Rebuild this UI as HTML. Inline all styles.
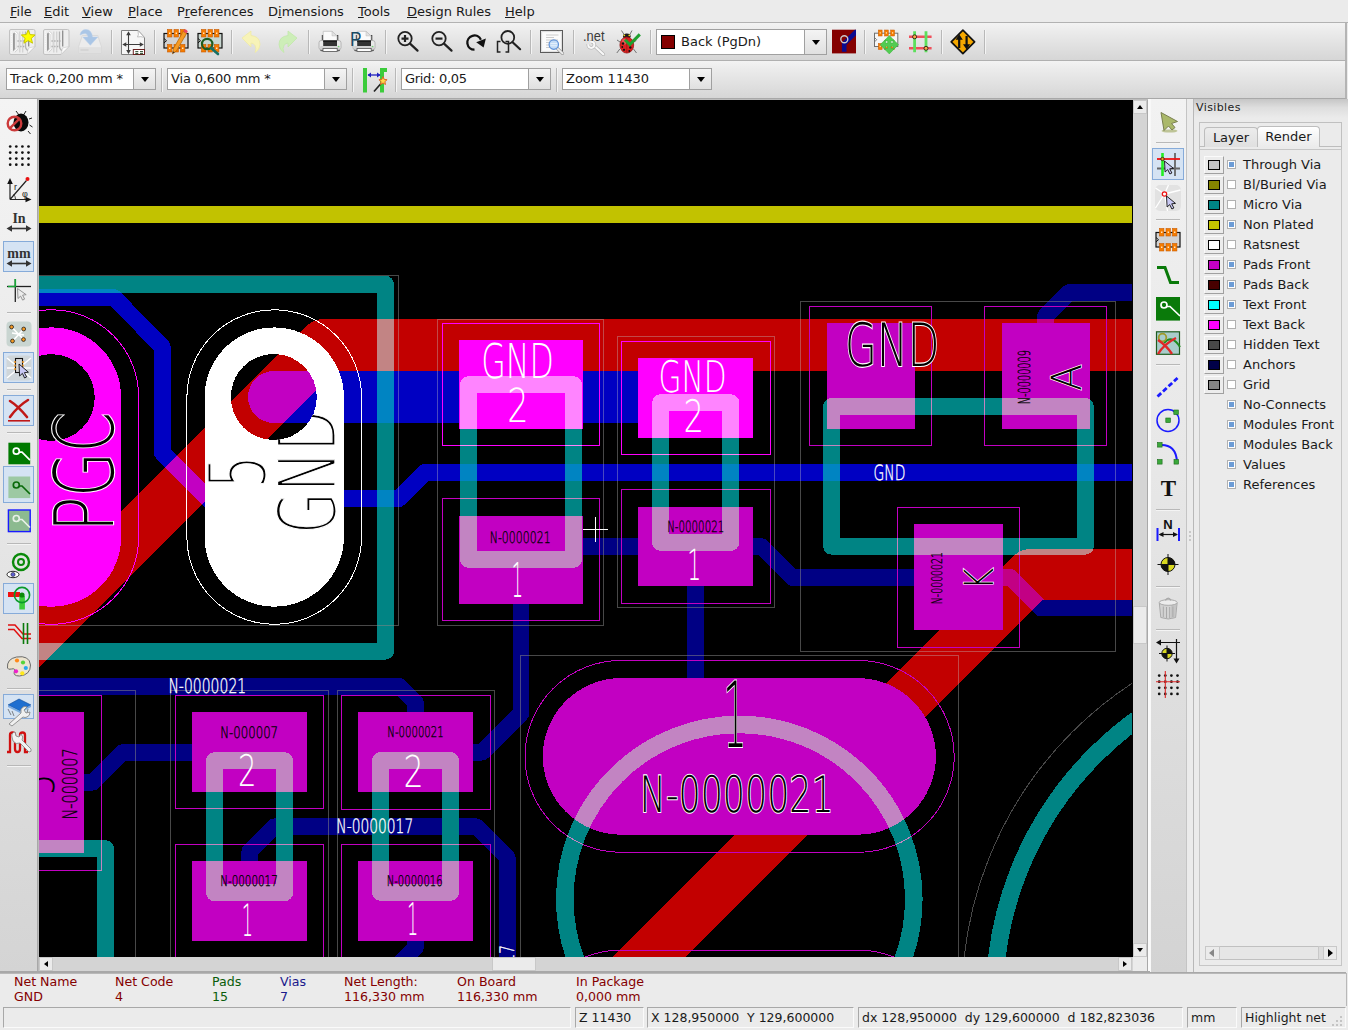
<!DOCTYPE html>
<html><head><meta charset="utf-8"><title>Pcbnew</title>
<style>
html,body{margin:0;padding:0;}
body{width:1348px;height:1030px;overflow:hidden;background:#ebebeb;font-family:"DejaVu Sans","Liberation Sans",sans-serif;font-size:13px;color:#1a1a1a;position:relative;}
#cv{position:absolute;left:39px;top:100px;width:1094px;height:857px;background:#000;}
#cv g.b{isolation:isolate;}

.abs{position:absolute}
#menubar{position:absolute;left:0;top:0;width:1348px;height:23px;background:#ebebeb;border-bottom:1px solid #b2b2b2;box-sizing:border-box}
#menubar span{position:absolute;top:4px;font-size:13px;white-space:nowrap;color:#1a1a1a}
#menubar u{text-decoration:underline;text-underline-offset:1px}
.tb{position:absolute;left:0;width:1345px;background:linear-gradient(#f3f3f3,#ececec 20%,#d6d6d6);border-right:2px solid #b4b4b4}
#tb1{top:23px;height:37px;border-bottom:1px solid #b0b0b0}
#tb2{top:61px;height:37px;border-bottom:1px solid #a8a8a8}
.sep{position:absolute;width:1px;background:#b8b8b8;box-shadow:1px 0 0 #f4f4f4}
.hsep{position:absolute;height:1px;background:#b8b8b8;box-shadow:0 1px 0 #f4f4f4}
.combo{position:absolute;height:22px;box-sizing:border-box;border:1px solid #a0a0a0;background:#fff;font-size:13px;line-height:20px;white-space:nowrap}
.combo .t{position:absolute;left:3px;top:0}
.combo .btn{position:absolute;top:-1px;right:-1px;width:23px;height:22px;box-sizing:border-box;border:1px solid #a0a0a0;background:linear-gradient(#f4f4f4,#e0e0e0)}
.combo .btn i{position:absolute;left:7px;border-left:4.5px solid transparent;border-right:4.5px solid transparent;border-top:5px solid #000}
.ico{position:absolute;overflow:visible}
#ltb{position:absolute;left:0;top:99px;width:37px;height:873px;background:linear-gradient(#f4f4f4,#e9e9e9 40%,#d4d4d4);border-right:1px solid #a8a8a8;box-shadow:1px 0 0 #bababa;box-sizing:content-box}
#rtb{position:absolute;left:1150px;top:99px;width:37px;height:873px;background:linear-gradient(#f2f2f2,#e8e8e8 40%,#d3d3d3);box-shadow:inset 1px 0 0 #f8f8f8, inset -1px 0 0 #c4c4c4}
.sel{position:absolute;box-sizing:border-box;border:1px solid #86abd9;background:#d5e3f3}
#vsb{position:absolute;left:1133px;top:100px;width:15px;height:857px;background:#d4d4d4;border-right:1px solid #a8a8a8;box-sizing:border-box}
#hsb{position:absolute;left:39px;top:957px;width:1094px;height:14px;background:#d4d4d4;box-sizing:border-box}
.sbb{position:absolute;background:#ebebeb;border:1px solid #c8c8c8;box-sizing:border-box}
.tri{position:absolute;width:0;height:0}
#msg{position:absolute;left:0;top:973px;width:1346px;height:32px;background:#ebebeb;border-top:1px solid #b8b8b8;border-bottom:1px solid #b8b8b8;border-right:1px solid #b8b8b8;font-size:12.6px}
#msg span{position:absolute;white-space:nowrap;line-height:15px}
#status{position:absolute;left:0;top:1006px;width:1348px;height:24px;background:#ebebeb;font-size:12.5px}
#status div{position:absolute;top:1px;height:21px;box-sizing:border-box;border:1px solid;border-color:#a8a8a8 #fafafa #fafafa #a8a8a8;line-height:19px;white-space:pre;padding-left:3px}
#lay{position:absolute;left:1193px;top:99px;width:155px;height:873px;background:#ebebeb;border-left:1px solid #b8b8b8;box-sizing:border-box;font-size:13px}
#lay .row{position:absolute;left:0;height:20px;white-space:nowrap}
.sw{position:absolute;left:10px;width:20px;height:18px;box-sizing:border-box;border:1px solid;border-color:#fafafa #a0a0a0 #a0a0a0 #fafafa;background:#ececec}
.sw i{position:absolute;left:3px;top:3px;width:12px;height:10px;box-sizing:border-box;border:1px solid #000}
.cb{position:absolute;left:33px;width:9px;height:9px;box-sizing:border-box;border:1px solid #b0b0b0;background:#fff}
.cb.on:after{content:"";position:absolute;left:1px;top:1px;width:5px;height:5px;background:#6c9cd6}
.lbl{position:absolute;left:49px;line-height:20px}

</style></head><body>
<div id="menubar">
<span style="left:10px"><u>F</u>ile</span>
<span style="left:44px"><u>E</u>dit</span>
<span style="left:82px"><u>V</u>iew</span>
<span style="left:128px"><u>P</u>lace</span>
<span style="left:177px">P<u>r</u>eferences</span>
<span style="left:268px">D<u>i</u>mensions</span>
<span style="left:358px"><u>T</u>ools</span>
<span style="left:407px"><u>D</u>esign Rules</span>
<span style="left:505px"><u>H</u>elp</span>
</div>
<div class="tb" id="tb1"></div><div class="tb" id="tb2"></div>
<div class="sep" style="left:111px;top:30px;height:24px"></div>
<div class="sep" style="left:154px;top:30px;height:24px"></div>
<div class="sep" style="left:231px;top:30px;height:24px"></div>
<div class="sep" style="left:308px;top:30px;height:24px"></div>
<div class="sep" style="left:385px;top:30px;height:24px"></div>
<div class="sep" style="left:530px;top:30px;height:24px"></div>
<div class="sep" style="left:573px;top:30px;height:24px"></div>
<div class="sep" style="left:650px;top:30px;height:24px"></div>
<div class="sep" style="left:864px;top:30px;height:24px"></div>
<div class="sep" style="left:941px;top:30px;height:24px"></div>
<div class="sep" style="left:984px;top:30px;height:24px"></div>
<div class="sep" style="left:161px;top:68px;height:24px"></div>
<div class="sep" style="left:352px;top:68px;height:24px"></div>
<div class="sep" style="left:395px;top:68px;height:24px"></div>
<div class="sep" style="left:556px;top:68px;height:24px"></div>
<svg class="ico" style="left:0;top:0" width="1348" height="100" viewBox="0 0 1348 100"><path d="M11.0,29.5 h22.5 q1.5,0 1.5,1.5 v15.5 l-8,8 h-16 q-1.5,0 -1.5,-1.5 v-22 q0,-1.5 1.500,-1.500 z" fill="#eeeeee" stroke="#c2c2c2" stroke-width="1"/><path d="M11.5,31.5 v21" stroke="#fafafa" stroke-dasharray="1 1.3"/><path d="M13.1,33.5 l1.700,-1 v17.500 l-1.700,1.200 z" fill="#8e8e8e"/><path d="M14.5,31.5 l2.600,2.600 v14.500 l-3,3" fill="none" stroke="#c8c8c8" stroke-width="2.400"/><path d="M14.5,31.5 l2.600,2.600 v14.500 l-3,3" fill="none" stroke="#fff" stroke-width="1.200"/><path d="M19.8,31.5 v21 M22.7,31.5 v21" stroke="#d2d2d2" stroke-width="1.300"/><path d="M25.5,31.5 v14 q0,4 3,5.500" fill="none" stroke="#b4b4b4" stroke-width="1.300"/><path d="M28.7,30.5 v16" stroke="#8c8c8c" stroke-width="1.300"/><path d="M17.5,41.0 h9 M17.5,46.5 h7" stroke="#a8a8a8" stroke-width="1.600" stroke-dasharray="1.2 1.600"/><path d="M27.0,54.5 l8,-8 l-6.500,1.500 z" fill="#fafafa" stroke="#c8c8c8" stroke-width=".6"/><polygon points="28.2,30.0 30.1,34.6 35.1,35.0 31.3,38.3 32.5,43.2 28.2,40.6 23.9,43.2 25.1,38.3 21.3,35.0 26.3,34.6" fill="#ffff00" stroke="#c8c800" stroke-width="1"/><path d="M45.0,29.5 h22.5 q1.5,0 1.5,1.5 v15.5 l-8,8 h-16 q-1.5,0 -1.5,-1.5 v-22 q0,-1.5 1.500,-1.500 z" fill="#eeeeee" stroke="#c2c2c2" stroke-width="1"/><path d="M45.5,31.5 v21" stroke="#fafafa" stroke-dasharray="1 1.3"/><path d="M47.1,33.5 l1.700,-1 v17.500 l-1.700,1.200 z" fill="#8e8e8e"/><path d="M48.5,31.5 l2.600,2.600 v14.500 l-3,3" fill="none" stroke="#c8c8c8" stroke-width="2.400"/><path d="M48.5,31.5 l2.600,2.600 v14.500 l-3,3" fill="none" stroke="#fff" stroke-width="1.200"/><path d="M53.8,31.5 v21 M56.7,31.5 v21" stroke="#d2d2d2" stroke-width="1.300"/><path d="M59.5,31.5 v14 q0,4 3,5.500" fill="none" stroke="#b4b4b4" stroke-width="1.300"/><path d="M62.7,30.5 v16" stroke="#8c8c8c" stroke-width="1.300"/><path d="M51.5,41.0 h9 M51.5,46.5 h7" stroke="#a8a8a8" stroke-width="1.600" stroke-dasharray="1.2 1.600"/><path d="M61.0,54.5 l8,-8 l-6.500,1.500 z" fill="#fafafa" stroke="#c8c8c8" stroke-width=".6"/><path d="M78.500,47 l3.800,-11.500 h15.500 l3.700,11.500 v6 h-23 z" fill="#ececec" stroke="#d6d6d6" stroke-width=".8"/><path d="M78.800,47.200 h22.400 v5.800 h-22.400 z" fill="#e0e0e0"/><path d="M80.500,50 h8" stroke="#d2d2d2" stroke-width="1.500"/><path d="M80,35 q1,-5.500 6,-5.500 q5.500,0 6.500,7.500 h5.300 l-7.500,8.300 l-7.500,-8.300 h5.200 q-0.500,-3.500 -3,-3.500 q-2.500,0 -5,1.500 z" fill="#aac6e6" stroke="#b8cfea" stroke-width=".5"/><path d="M121.5,30.5 h16.500 l6.500,7 v17 h-23 z" fill="#f6f6f6" stroke="#808080" stroke-width="1"/><path d="M138,30.500 q1,5 -0.500,6.500 q3,-1 7,0.500 z" fill="#fff" stroke="#aaa" stroke-width=".7"/><path d="M128.500,33 v19.500 M124,44.500 h18" stroke="#3c3c3c" stroke-width="1.100"/><path d="M128.500,31.300 l-2.300,4 h4.600 z M128.500,54 l-2.300,-4 h4.600 z M122.300,44.500 l4,-2.300 v4.600 z M143.800,44.500 l-4,-2.300 v4.600 z" fill="#3c3c3c"/><rect x="133.300" y="49.500" width="11.200" height="5" fill="#fff" stroke="#6a2020" stroke-width="1"/><path d="M135.300,51.700 h3 M140,51.700 h3 M135.300,53.700 h3 M140,53.700 h3" stroke="#1a3a1a" stroke-width="1"/><rect x="164" y="33.5" width="24" height="14.5" fill="#d2d2d2" stroke="#111" stroke-width="1.2"/><path d="M164,38.5 l2.5,2.2 l-2.5,2.2" fill="none" stroke="#111" stroke-width="1"/><rect x="167.5" y="29.5" width="4.4" height="7.5" fill="#f57c00" stroke="#c85a00" stroke-width=".6"/><rect x="169.1" y="32.5" width="1.300" height="1.500" fill="#fff0d8"/><rect x="167.5" y="44.5" width="4.4" height="7.5" fill="#f57c00" stroke="#c85a00" stroke-width=".6"/><rect x="169.1" y="47.5" width="1.300" height="1.500" fill="#fff0d8"/><rect x="174.0" y="29.5" width="4.4" height="7.5" fill="#f57c00" stroke="#c85a00" stroke-width=".6"/><rect x="175.6" y="32.5" width="1.300" height="1.500" fill="#fff0d8"/><rect x="174.0" y="44.5" width="4.4" height="7.5" fill="#f57c00" stroke="#c85a00" stroke-width=".6"/><rect x="175.6" y="47.5" width="1.300" height="1.500" fill="#fff0d8"/><rect x="180.5" y="29.5" width="4.4" height="7.5" fill="#f57c00" stroke="#c85a00" stroke-width=".6"/><rect x="182.1" y="32.5" width="1.300" height="1.500" fill="#fff0d8"/><rect x="180.5" y="44.5" width="4.4" height="7.5" fill="#f57c00" stroke="#c85a00" stroke-width=".6"/><rect x="182.1" y="47.5" width="1.300" height="1.500" fill="#fff0d8"/><path d="M186.5,33.5 l-3.2,-2.2 l-10,17.5 l-0.8,5 l4,-3 z" fill="#f59a23" stroke="#b86400" stroke-width=".7"/><path d="M183.3,31.3 l3.2,2.2 l1.3,-2.3 q-1.2,-2 -3.2,-2 z" fill="#e84a5f"/><path d="M172.5,53.8 l0.4,-2.6 l1.9,1.3 z" fill="#333"/><rect x="198" y="33.5" width="24" height="14.5" fill="#c8d6d0" stroke="#111" stroke-width="1.2"/><path d="M198,38.5 l2.5,2.2 l-2.5,2.2" fill="none" stroke="#111" stroke-width="1"/><rect x="201.5" y="29.5" width="4.4" height="7.5" fill="#f57c00" stroke="#c85a00" stroke-width=".6"/><rect x="203.1" y="32.5" width="1.300" height="1.500" fill="#fff0d8"/><rect x="201.5" y="44.5" width="4.4" height="7.5" fill="#f57c00" stroke="#c85a00" stroke-width=".6"/><rect x="203.1" y="47.5" width="1.300" height="1.500" fill="#fff0d8"/><rect x="208.0" y="29.5" width="4.4" height="7.5" fill="#f57c00" stroke="#c85a00" stroke-width=".6"/><rect x="209.6" y="32.5" width="1.300" height="1.500" fill="#fff0d8"/><rect x="208.0" y="44.5" width="4.4" height="7.5" fill="#f57c00" stroke="#c85a00" stroke-width=".6"/><rect x="209.6" y="47.5" width="1.300" height="1.500" fill="#fff0d8"/><rect x="214.5" y="29.5" width="4.4" height="7.5" fill="#f57c00" stroke="#c85a00" stroke-width=".6"/><rect x="216.1" y="32.5" width="1.300" height="1.500" fill="#fff0d8"/><rect x="214.5" y="44.5" width="4.4" height="7.5" fill="#f57c00" stroke="#c85a00" stroke-width=".6"/><rect x="216.1" y="47.5" width="1.300" height="1.500" fill="#fff0d8"/><circle cx="207.2" cy="44" r="5.2" fill="none" stroke="#1e5c1e" stroke-width="2.2"/><path d="M211,48 l7,6" stroke="#157064" stroke-width="2.6" stroke-linecap="round"/><path d="M242,38 l9,-7 v4.5 q9,1 9,9 q0,5 -5,8 q2,-4 0,-7 q-1.5,-2.5 -4,-2.5 v4 z" fill="#f7f3b8" stroke="#efe9a0" stroke-width=".7"/><path d="M297,38 l-9,-7 v4.5 q-9,1 -9,9 q0,5 5,8 q-2,-4 0,-7 q1.5,-2.5 4,-2.5 v4 z" fill="#cdeeb8" stroke="#bfe6a6" stroke-width=".7"/><rect x="320.2" y="47.0" width="19.800" height="4.300" rx="1.500" fill="#4c4c4c"/><rect x="321.8" y="35.0" width="1.500" height="6" fill="#444"/><rect x="336.8" y="35.0" width="1.500" height="6" fill="#444"/><path d="M323.2,40.5 v-9.200 h8.800 l5,4.600 v4.600 z" fill="#fafafa" stroke="#b8b8b8" stroke-width=".7"/><path d="M332,31.3 v4.600 h5 z" fill="#e2e2e2" stroke="#b8b8b8" stroke-width=".5"/><rect x="319" y="40.5" width="22" height="9.300" rx="2.200" fill="#e9e9e9" stroke="#a8a8a8" stroke-width=".8"/><rect x="319.6" y="46.0" width="20.800" height="3.300" rx="1.500" fill="#d2d2d2"/><rect x="323.2" y="40.5" width="13.800" height="5.500" fill="#333"/><rect x="323.2" y="40.5" width="13.800" height="1.500" fill="#1c1c1c"/><rect x="323" y="48.5" width="14.200" height="3" fill="#fdfdfd" stroke="#555" stroke-width=".8"/><circle cx="338.6" cy="46.5" r=".8" fill="#6fd86f"/><rect x="354.2" y="47.0" width="19.800" height="4.300" rx="1.500" fill="#4c4c4c"/><rect x="355.8" y="35.0" width="1.500" height="6" fill="#444"/><rect x="370.8" y="35.0" width="1.500" height="6" fill="#444"/><path d="M357.2,40.5 v-9.200 h8.800 l5,4.600 v4.600 z" fill="#fafafa" stroke="#b8b8b8" stroke-width=".7"/><path d="M366,31.3 v4.600 h5 z" fill="#e2e2e2" stroke="#b8b8b8" stroke-width=".5"/><rect x="353" y="40.5" width="22" height="9.300" rx="2.200" fill="#e9e9e9" stroke="#a8a8a8" stroke-width=".8"/><rect x="353.6" y="46.0" width="20.800" height="3.300" rx="1.500" fill="#d2d2d2"/><rect x="357.2" y="40.5" width="13.800" height="5.500" fill="#333"/><rect x="357.2" y="40.5" width="13.800" height="1.500" fill="#1c1c1c"/><rect x="357" y="48.5" width="14.200" height="3" fill="#fdfdfd" stroke="#555" stroke-width=".8"/><circle cx="372.6" cy="46.5" r=".8" fill="#6fd86f"/><text x="350" y="45.5" font-family="Liberation Sans, sans-serif" font-size="21" fill="#174a63" textLength="11.5" lengthAdjust="spacingAndGlyphs">P</text><circle cx="405" cy="38.6" r="6.7" fill="none" stroke="#222" stroke-width="1.8"/><path d="M410.025,43.625 l7.5,7" stroke="#222" stroke-width="2.2" stroke-linecap="round"/><path d="M401.5,38.6 h7 M405,35.1 v7" stroke="#222" stroke-width="2.2"/><circle cx="439" cy="38.6" r="6.7" fill="none" stroke="#222" stroke-width="1.8"/><path d="M444.025,43.625 l7.5,7" stroke="#222" stroke-width="2.2" stroke-linecap="round"/><path d="M435.5,38.6 h7" stroke="#222" stroke-width="2.2"/><path d="M474.500,49.700 a7.100,7.100 0 1 1 6.400,-10" fill="none" stroke="#111" stroke-width="2.300"/><path d="M476.200,42.300 l9.700,-3.900 l-2.300,9.200 z" fill="#111"/><circle cx="507.8" cy="37.4" r="6.4" fill="none" stroke="#222" stroke-width="1.8"/><path d="M512.6,42.2 l7.5,7" stroke="#222" stroke-width="2.2" stroke-linecap="round"/><path d="M500.5,41.5 h-3 v10.5 h3 M505.5,41.5 h3 v10.5 h-3" fill="none" stroke="#222" stroke-width="1.5"/><rect x="540.500" y="30.500" width="22" height="22" fill="#fbfbfb" stroke="#5a5a5a" stroke-width="1"/><rect x="541.700" y="31.700" width="19.600" height="19.600" fill="none" stroke="#d4d4d4" stroke-width=".8"/><path d="M546,35 h12.500 M546,37.500 h8 M546,40 h12 M546,42.500 h4 M546,45 h3 M546,47.500 h4" stroke="#cccccc" stroke-width="1"/><path d="M557.300,48.300 l5.200,5" stroke="#9a9a9a" stroke-width="3.200" stroke-linecap="round"/><path d="M557.300,48.300 l5.200,5" stroke="#eeeeee" stroke-width="1.800" stroke-linecap="round"/><circle cx="553.800" cy="44.600" r="4.700" fill="#c4dcf6" stroke="#5f92d8" stroke-width="1.200"/><path d="M550.500,43.500 h6.600 M550.500,45.700 h6.600" stroke="#e8f2fc" stroke-width=".9"/><path d="M595,46.500 l8.300,7.700" stroke="#b4b4b4" stroke-width="3.600" stroke-linecap="round"/><path d="M595,46.500 l8.300,7.700" stroke="#f8f8f8" stroke-width="2.200" stroke-linecap="round"/><circle cx="591.300" cy="44.800" r="3.100" fill="none" stroke="#b4b4b4" stroke-width="3.400"/><circle cx="591.300" cy="44.800" r="3.100" fill="none" stroke="#f8f8f8" stroke-width="2"/><path d="M591.800,45.300 l-8.500,-2 l5,-7 z" fill="#e4e4e4"/><text x="583" y="40.600" font-family="Liberation Sans, sans-serif" font-size="14.500" fill="#3a3a3a" textLength="21.500" lengthAdjust="spacingAndGlyphs">.net</text><path d="M621.500,30.500 l3.500,5.500 M632,30.500 l-3,5.500 M620,42 l-3,-2 M619.800,49 l-3,4 M633.500,49 l3,4 M633.800,42 l2.500,-1.500" stroke="#666" stroke-width=".9"/><ellipse cx="626.800" cy="36.300" rx="3.800" ry="2.700" fill="#1c1c1c"/><circle cx="624.300" cy="35.300" r=".9" fill="#f0d820"/><circle cx="629.300" cy="35.300" r=".9" fill="#f0d820"/><ellipse cx="626.800" cy="45" rx="6.900" ry="8.100" fill="#dc2020" stroke="#8a1010" stroke-width=".7"/><ellipse cx="624.300" cy="41.500" rx="2.500" ry="3" fill="#f06a6a" opacity=".7"/><path d="M626.800,37.500 v15" stroke="#8a1010" stroke-width=".6"/><circle cx="623" cy="43.500" r="1.200" fill="#111"/><circle cx="630.300" cy="47.500" r="1.200" fill="#111"/><circle cx="624" cy="49.800" r="1.100" fill="#111"/><circle cx="629.300" cy="51" r="1" fill="#111"/><circle cx="622.300" cy="47" r=".9" fill="#111"/><path d="M625,39.800 l4.800,4.800 l10,-10.200" fill="none" stroke="#1fa02f" stroke-width="3"/><rect x="832" y="29.7" width="24" height="23.7" fill="#840000"/><path d="M856,29.700 v5.500 l-9.500,9.500 v7 h-4.600 v-9 l13,-13 z" fill="#0a0a90"/><circle cx="844.300" cy="39.300" r="3.500" fill="none" stroke="#c8c8c8" stroke-width="1.400"/><rect x="874.500" y="33.200" width="23.300" height="13.300" fill="#f6f6f6" stroke="#707070" stroke-width="1"/><path d="M874.500,37.500 l2.200,2.200 l-2.200,2.200" fill="none" stroke="#707070" stroke-width=".9"/><rect x="878.3" y="30" width="3.800" height="6" fill="#f57c00" stroke="#c85a00" stroke-width=".5"/><rect x="879.6" y="32.2" width="1.200" height="1.400" fill="#ffe0b0"/><rect x="878.3" y="43.5" width="3.800" height="6" fill="#f57c00" stroke="#c85a00" stroke-width=".5"/><rect x="879.6" y="45.7" width="1.200" height="1.400" fill="#ffe0b0"/><rect x="884.5" y="30" width="3.800" height="6" fill="#f57c00" stroke="#c85a00" stroke-width=".5"/><rect x="885.8" y="32.2" width="1.200" height="1.400" fill="#ffe0b0"/><rect x="884.5" y="43.5" width="3.800" height="6" fill="#f57c00" stroke="#c85a00" stroke-width=".5"/><rect x="885.8" y="45.7" width="1.200" height="1.400" fill="#ffe0b0"/><rect x="890.7" y="30" width="3.800" height="6" fill="#f57c00" stroke="#c85a00" stroke-width=".5"/><rect x="892.0" y="32.2" width="1.200" height="1.400" fill="#ffe0b0"/><rect x="890.7" y="43.5" width="3.800" height="6" fill="#f57c00" stroke="#c85a00" stroke-width=".5"/><rect x="892.0" y="45.7" width="1.200" height="1.400" fill="#ffe0b0"/><polygon points="889.3,35.5 894.5,40.9 890.9,40.9 890.9,43.1 893.1,43.1 893.1,39.5 898.5,44.7 893.1,49.9 893.1,46.3 890.9,46.3 890.9,48.5 894.5,48.5 889.3,53.9 884.1,48.5 887.7,48.5 887.7,46.3 885.5,46.3 885.5,49.9 880.1,44.7 885.5,39.5 885.5,43.1 887.7,43.1 887.7,40.9 884.1,40.9" fill="#52cc52" stroke="#40b840" stroke-width=".6"/><path d="M909,36.800 h22.600 M909,48.300 h22.600" stroke="#f0505c" stroke-width="2.400"/><path d="M914.600,31.300 v21 M926,31.300 v21" stroke="#5ce05c" stroke-width="2.800"/><circle cx="914.600" cy="36.800" r="2" fill="#f8a848" stroke="#111" stroke-width=".8"/><circle cx="926" cy="48.300" r="2" fill="#f8a848" stroke="#111" stroke-width=".8"/><path d="M962.900,30.200 l11.700,11.700 l-11.700,11.700 l-11.700,-11.700 z" fill="#f5a800" stroke="#111" stroke-width="1.700" stroke-linejoin="round"/><path d="M959.200,48 v-9 M966.600,36 v9" stroke="#111" stroke-width="2.200"/><path d="M959.200,34.300 l-3.600,5.400 h7.200 z M966.600,49.600 l-3.600,-5.400 h7.200 z" fill="#111"/><rect x="363" y="68" width="4" height="24.5" fill="#3ccc3c"/><rect x="380" y="68" width="4" height="24.5" fill="#3ccc3c"/><path d="M380,68 h7 v4 h-3" fill="#3ccc3c"/><path d="M368,75 h12" stroke="#2020c0" stroke-width="1.3"/><path d="M367.5,75 l3.5,-2.5 v5 z M380.5,75 l-3.5,-2.5 v5 z" fill="#2020c0"/><path d="M374,91.5 l7,-8" stroke="#222" stroke-width="1.6"/><polygon points="383.0,76.7 384.2,79.4 387.1,79.7 384.9,81.6 385.5,84.5 383.0,83.0 380.5,84.5 381.1,81.6 378.9,79.7 381.8,79.4" fill="#ffd84a" stroke="#e0662a" stroke-width="1"/></svg>
<div class="combo" style="left:656px;top:29px;width:171px;height:26px;line-height:24px;letter-spacing:0px"><span style="position:absolute;left:4px;top:5px;width:14px;height:14px;box-sizing:border-box;border:1px solid #000;background:#840000"></span><span class="t" style="left:24px">Back (PgDn)</span><span class="btn" style="height:26px"><i style="top:10px"></i></span></div>
<div class="combo" style="left:6px;top:68px;width:150px;height:22px;line-height:20px;letter-spacing:-0.16px"><span class="t" style="left:3px">Track 0,200 mm *</span><span class="btn" style="height:22px"><i style="top:8px"></i></span></div>
<div class="combo" style="left:167px;top:68px;width:180px;height:22px;line-height:20px;letter-spacing:-0.15px"><span class="t" style="left:3px">Via 0,600 mm *</span><span class="btn" style="height:22px"><i style="top:8px"></i></span></div>
<div class="combo" style="left:401px;top:68px;width:150px;height:22px;line-height:20px;letter-spacing:-0.31px"><span class="t" style="left:3px">Grid: 0,05</span><span class="btn" style="height:22px"><i style="top:8px"></i></span></div>
<div class="combo" style="left:562px;top:68px;width:150px;height:22px;line-height:20px;letter-spacing:0px"><span class="t" style="left:3px">Zoom 11430</span><span class="btn" style="height:22px"><i style="top:8px"></i></span></div>
<div id="ltb"></div>
<div class="hsep" style="left:7px;top:312px;width:24px"></div>
<div class="hsep" style="left:7px;top:389px;width:24px"></div>
<div class="hsep" style="left:7px;top:432px;width:24px"></div>
<div class="hsep" style="left:7px;top:543px;width:24px"></div>
<div class="hsep" style="left:7px;top:688px;width:24px"></div>
<div class="hsep" style="left:7px;top:765px;width:24px"></div>
<div class="sel" style="left:3px;top:241px;width:31px;height:31px"></div>
<div class="sel" style="left:3px;top:352px;width:31px;height:31px"></div>
<div class="sel" style="left:3px;top:395px;width:31px;height:31px"></div>
<div class="sel" style="left:3px;top:466px;width:31px;height:37px"></div>
<div class="sel" style="left:3px;top:583px;width:31px;height:31px"></div>
<div class="sel" style="left:3px;top:694px;width:31px;height:25px"></div>
<svg class="ico" style="left:0;top:0" width="40" height="800" viewBox="0 0 40 800"><path d="M16,111 l3,4 M26,111 l-2.5,4 M29,119 l3,-1 M29.5,125 l3,2 M28,131 l2.5,3" stroke="#222" stroke-width="1"/><ellipse cx="21" cy="122.5" rx="7.5" ry="9" fill="#0a0a0a"/><circle cx="14.5" cy="123.5" r="6.8" fill="none" stroke="#cc3a3a" stroke-width="2.4"/><path d="M9.8,128.3 l9.5,-9.5" stroke="#cc3a3a" stroke-width="2.4"/><circle cx="10.2" cy="146.5" r="1.35" fill="#111"/><circle cx="10.2" cy="152.6" r="1.35" fill="#111"/><circle cx="10.2" cy="158.6" r="1.35" fill="#111"/><circle cx="10.2" cy="164.7" r="1.35" fill="#111"/><circle cx="16.3" cy="146.5" r="1.35" fill="#111"/><circle cx="16.3" cy="152.6" r="1.35" fill="#111"/><circle cx="16.3" cy="158.6" r="1.35" fill="#111"/><circle cx="16.3" cy="164.7" r="1.35" fill="#111"/><circle cx="22.4" cy="146.5" r="1.35" fill="#111"/><circle cx="22.4" cy="152.6" r="1.35" fill="#111"/><circle cx="22.4" cy="158.6" r="1.35" fill="#111"/><circle cx="22.4" cy="164.7" r="1.35" fill="#111"/><circle cx="28.5" cy="146.5" r="1.35" fill="#111"/><circle cx="28.5" cy="152.6" r="1.35" fill="#111"/><circle cx="28.5" cy="158.6" r="1.35" fill="#111"/><circle cx="28.5" cy="164.7" r="1.35" fill="#111"/><path d="M10,199.5 v-17 M10,199.5 h18 M10,199.5 l16.5,-19" stroke="#222" stroke-width="1.2" fill="none"/><path d="M10,178 l-2.8,6 h5.6 z M31.5,199.5 l-6,-2.8 v5.6 z" fill="#111"/><circle cx="27.5" cy="179" r="2" fill="#e81010"/><path d="M15.5,199 a6,6 0 0 0 -2,-4.5" fill="none" stroke="#222" stroke-width=".8"/><text x="14" y="190" font-size="9" font-family="Liberation Sans, sans-serif" fill="#222">r</text><text x="22" y="197" font-size="9" font-family="Liberation Sans, sans-serif" fill="#222">φ</text><text x="19" y="222.5" text-anchor="middle" font-family="Liberation Serif, serif" font-weight="bold" font-size="14" fill="#333">In</text><path d="M10,228.5 h18" stroke="#333" stroke-width="1.6"/><path d="M6.5,228.5 l5.5,-3.2 v6.4 z M31.5,228.5 l-5.5,-3.2 v6.4 z" fill="#333"/><text x="19" y="258" text-anchor="middle" font-family="Liberation Serif, serif" font-weight="bold" font-size="14" fill="#333">mm</text><path d="M10,263.5 h18" stroke="#333" stroke-width="1.6"/><path d="M6.5,263.5 l5.5,-3.2 v6.4 z M31.5,263.5 l-5.5,-3.2 v6.4 z" fill="#333"/><path d="M7,286.5 h24" stroke="#222" stroke-width="1.3"/><path d="M15.3,279 v23" stroke="#222" stroke-width="1.3"/><path d="M15.3,279 v8 M8,286.5 h8" stroke="#18a838" stroke-width="1.6"/><path d="M17.5,288.5 l0.5,10 l2.6,-2.4 l2,4 l2,-1 l-2,-4 l3.6,-0.4 z" fill="#ececec" stroke="#8a8a8a" stroke-width=".9"/><rect x="6.5" y="321.5" width="25" height="25" rx="4" fill="#c9d5d1"/><path d="M11.6,327 l12,12.5 M23.7,329 l-11,12 M12,333 l12,2" stroke="#fff" stroke-width="1.6"/><circle cx="11.6" cy="327" r="1.9" fill="#f59a23" stroke="#222" stroke-width=".8"/><circle cx="23.7" cy="329" r="1.9" fill="#f59a23" stroke="#222" stroke-width=".8"/><circle cx="12.5" cy="341" r="1.9" fill="#f59a23" stroke="#222" stroke-width=".8"/><circle cx="23.5" cy="339.5" r="1.9" fill="#f59a23" stroke="#222" stroke-width=".8"/><rect x="6.5" y="355.5" width="25" height="25" rx="4" fill="#cfd6da"/><path d="M7,358 l24,20 M7,378 l24,-20 M7,368 h24" stroke="#fff" stroke-width="1.5"/><rect x="15.5" y="358.5" width="7" height="14" fill="#d8d8d8" stroke="#111" stroke-width="1.1"/><path d="M15,361 v9 M23,361 v9" stroke="#f59a23" stroke-width="1.5" stroke-dasharray="2 1.5"/><path d="M19,364 l0.6,12 l2.8,-2.6 l2.2,4.6 l2,-1 l-2.2,-4.4 l4,-0.4 z" fill="#c9c9f4" stroke="#111" stroke-width=".9"/><path d="M10,401 q8,5 17,16 M28,400 q-10,6 -18,17" fill="none" stroke="#c01818" stroke-width="2.6" stroke-linecap="round"/><path d="M8,420.8 h22" stroke="#c01818" stroke-width="1.6"/><rect x="8.4" y="442.7" width="21.8" height="21.6" fill="#007a00"/><circle cx="16.3" cy="451.2" r="3" fill="none" stroke="#fff" stroke-width="1.7"/><path d="M19,452.2 h3 l8,8" fill="none" stroke="#fff" stroke-width="1.7"/><rect x="8.4" y="476.5" width="21.8" height="21.6" fill="#9dc9a3"/><circle cx="16.3" cy="485.0" r="3" fill="none" stroke="#0a6a0a" stroke-width="1.7"/><path d="M19,486.0 h3 l8,8" fill="none" stroke="#0a6a0a" stroke-width="1.7"/><rect x="8.4" y="510" width="21.8" height="21.6" fill="#8cba90" stroke="#1a1aff" stroke-width="1.4"/><circle cx="16.3" cy="518.5" r="3" fill="none" stroke="#e8f0e8" stroke-width="1.7"/><path d="M19,519.5 h3 l8,8" fill="none" stroke="#e8f0e8" stroke-width="1.7"/><circle cx="21" cy="562" r="8" fill="none" stroke="#0a8a0a" stroke-width="2.4"/><circle cx="21" cy="562" r="3" fill="none" stroke="#0a8a0a" stroke-width="2"/><ellipse cx="13" cy="574.5" rx="6" ry="3.2" fill="#fff" stroke="#111" stroke-width=".9"/><circle cx="13" cy="574.5" r="2.1" fill="#6060d0" stroke="#111" stroke-width=".5"/><rect x="8" y="592" width="12" height="5" fill="#f01010"/><rect x="19.3" y="596" width="5.6" height="13.5" fill="#3ccc3c"/><circle cx="22" cy="595" r="7.6" fill="none" stroke="#0a9a2a" stroke-width="1.6"/><circle cx="22" cy="595" r="2.6" fill="#0a8a0a"/><path d="M8,625 h7 l8,9 h8 M8,629.5 h6 l8,9 h9" fill="none" stroke="#e01010" stroke-width="1.5"/><path d="M23.5,623 v21 M27.5,623 v21" stroke="#0a7a0a" stroke-width="1.6"/><path d="M7.5,668 q-1,-9 9,-11 q13,-2 14,8 q0,10 -11,11 q-7,0 -5,-5 q1,-3 -3,-2 q-3.5,1 -4,-1 z" fill="#ece4d0" stroke="#6a6a6a" stroke-width="1"/><circle cx="17" cy="660.5" r="2.1" fill="#ff8a1a"/><circle cx="23" cy="662.5" r="2.1" fill="#55d43a"/><circle cx="25.8" cy="668" r="2.1" fill="#28a8f0"/><circle cx="22.3" cy="673.3" r="2.1" fill="#ffe81a"/><circle cx="16" cy="671.3" r="2.1" fill="#ee22cc"/><path d="M8,705 l11,-6 l12,6 l-11,6 z" fill="#1f6fd0" stroke="#0d4a96" stroke-width=".6"/><path d="M8,705 v2 l12,6 v-2 z M31,705 v2 l-11,6 v-2 z" fill="#7aa8e0"/><path d="M8,709 l3,6 M12,711 l2,5 M28,709 l-1,4" stroke="#555" stroke-width=".7"/><path d="M9,724 l12,-11 q-1,-4 2,-6 q2,-1 4,0 l-3,3 l2,3 l4,-1 q0,4 -3,5 q-2,1 -4,0 l-11,9 z" fill="#f0f0f0" stroke="#8a8a8a" stroke-width=".9"/><path d="M7,752 h3 v-17 q0,-2.5 2.5,-2.5 q2.500,0 2.500,2.500 v14 q0,3 2.500,3 q2.500,0 2.500,-3 v-14 q0,-2.5 2.500,-2.500 q2.500,0 2.500,2.500 v17 h3" fill="none" stroke="#d01010" stroke-width="2.300"/><path d="M12,737 q-1,-4 3,-5 l1,4 l3,1 l2,-3 q3,3 1,6 l9,9 q1,3 -2,3 l-9,-9 q-4,2 -7,-2 z" fill="#f2f2f2" stroke="#8a8a8a" stroke-width=".9"/></svg>
<div id="vsb"><div class="sbb" style="left:0;top:0;width:14px;height:14px"></div><div class="tri" style="left:3.500px;top:5px;border-left:3.500px solid transparent;border-right:3.500px solid transparent;border-bottom:4px solid #000"></div><div class="sbb" style="left:0;top:506px;width:14px;height:38px"></div><div class="sbb" style="left:0;top:843px;width:14px;height:14px"></div><div class="tri" style="left:3.500px;top:848px;border-left:3.500px solid transparent;border-right:3.500px solid transparent;border-top:4px solid #000"></div></div>
<div id="hsb"><div class="sbb" style="left:0;top:0;width:14px;height:14px"></div><div class="tri" style="left:5px;top:3.500px;border-top:3.500px solid transparent;border-bottom:3.500px solid transparent;border-right:4px solid #000"></div><div class="sbb" style="left:453px;top:0;width:44px;height:14px"></div><div class="sbb" style="left:1079px;top:0;width:14px;height:14px"></div><div class="tri" style="left:1084px;top:3.500px;border-top:3.500px solid transparent;border-bottom:3.500px solid transparent;border-left:4px solid #000"></div></div>
<div class="abs" style="left:1133px;top:957px;width:15px;height:14px;background:#ebebeb;border-right:1px solid #a8a8a8;box-sizing:border-box"></div>
<div class="abs" style="left:1148px;top:99px;width:2px;height:873px;background:#fafafa"></div><div class="abs" style="left:0;top:971px;width:1346px;height:2px;background:#a8a8a8"></div><div class="abs" style="left:38px;top:99px;width:1110px;height:1px;background:#bcbcbc"></div>
<div id="rtb"></div>
<div class="hsep" style="left:1156px;top:142px;width:24px"></div>
<div class="hsep" style="left:1156px;top:219px;width:24px"></div>
<div class="hsep" style="left:1156px;top:364px;width:24px"></div>
<div class="hsep" style="left:1156px;top:509px;width:24px"></div>
<div class="hsep" style="left:1156px;top:586px;width:24px"></div>
<div class="hsep" style="left:1156px;top:629px;width:24px"></div>
<div class="sel" style="left:1152px;top:148px;width:32px;height:32px"></div>
<svg class="ico" style="left:0;top:0" width="1348" height="800" viewBox="0 0 1348 800"><ellipse cx="1169.500" cy="131" rx="8" ry="1.6" fill="#a8b070" opacity=".7"/><path d="M1161,112.500 l3,18 l4.500,-4.500 l3.500,4 l3,-2.500 l-3.500,-4 l6,-2 z" fill="#aab86a" stroke="#7a8050" stroke-width="1"/><path d="M1157,168.500 h23 M1175,153 v23" stroke="#666" stroke-width="1.800"/><path d="M1157,159 h23" stroke="#ee1111" stroke-width="1.800"/><path d="M1162.500,153 v23" stroke="#22ee22" stroke-width="2.600"/><circle cx="1162.500" cy="159" r="1.700" fill="#f59a23" stroke="#111" stroke-width=".7"/><path d="M1164.500,161 l0.600,11 l2.600,-2.400 l2.200,4.400 l2,-1 l-2.200,-4.200 l3.800,-0.400 z" fill="#c9c9f4" stroke="#111" stroke-width=".9"/><rect x="1155" y="185" width="26" height="26" rx="5" fill="#e2e2e2"/><path d="M1164.500,194 l-9,-6 M1164.500,194 l4,-9 M1164.500,194 l16,-4 M1164.500,194 l-9,14 M1164.500,194 l3,17" stroke="#fff" stroke-width="1.300"/><circle cx="1164.500" cy="194" r="2.200" fill="none" stroke="#ee1111" stroke-width="1.200"/><path d="M1166.500,196 l0.600,11 l2.600,-2.400 l2.200,4.400 l2,-1 l-2.200,-4.200 l3.800,-0.400 z" fill="#c9c9f4" stroke="#111" stroke-width=".9"/><rect x="1156" y="232.5" width="24" height="14.5" fill="#d2d2d2" stroke="#111" stroke-width="1.2"/><path d="M1156,237.5 l2.5,2.2 l-2.5,2.2" fill="none" stroke="#111" stroke-width="1"/><rect x="1159.5" y="228.5" width="4.4" height="7.5" fill="#f57c00" stroke="#c85a00" stroke-width=".6"/><rect x="1161.1" y="231.5" width="1.300" height="1.500" fill="#fff0d8"/><rect x="1159.5" y="243.5" width="4.4" height="7.5" fill="#f57c00" stroke="#c85a00" stroke-width=".6"/><rect x="1161.1" y="246.5" width="1.300" height="1.500" fill="#fff0d8"/><rect x="1166.0" y="228.5" width="4.4" height="7.5" fill="#f57c00" stroke="#c85a00" stroke-width=".6"/><rect x="1167.6" y="231.5" width="1.300" height="1.500" fill="#fff0d8"/><rect x="1166.0" y="243.5" width="4.4" height="7.5" fill="#f57c00" stroke="#c85a00" stroke-width=".6"/><rect x="1167.6" y="246.5" width="1.300" height="1.500" fill="#fff0d8"/><rect x="1172.5" y="228.5" width="4.4" height="7.5" fill="#f57c00" stroke="#c85a00" stroke-width=".6"/><rect x="1174.1" y="231.5" width="1.300" height="1.500" fill="#fff0d8"/><rect x="1172.5" y="243.5" width="4.4" height="7.5" fill="#f57c00" stroke="#c85a00" stroke-width=".6"/><rect x="1174.1" y="246.5" width="1.300" height="1.500" fill="#fff0d8"/><path d="M1157,267.500 h8 l5.500,15 h8.500" fill="none" stroke="#0a7a0a" stroke-width="3"/><rect x="1156" y="297" width="24" height="23.600" fill="#0a7a0a"/><circle cx="1164" cy="305" r="3" fill="none" stroke="#fff" stroke-width="1.700"/><path d="M1167,306.500 h3 l10,9.500" fill="none" stroke="#fff" stroke-width="1.700"/><rect x="1156.500" y="331.800" width="23" height="22.500" fill="#a9cccb" stroke="#1e5c1e" stroke-width="1.200"/><path d="M1164,343 q8,-9 16,4" fill="none" stroke="#1e8c1e" stroke-width="2"/><circle cx="1162.500" cy="337.500" r="3.800" fill="none" stroke="#a09a2a" stroke-width="1.800"/><path d="M1158,340 q9,6 14,14 M1176,338 q-12,6 -18,16" fill="none" stroke="#e02828" stroke-width="2.400"/><path d="M1157.500,396.500 l20,-18.500" stroke="#1a1aff" stroke-width="2.800" stroke-dasharray="5 2.500"/><circle cx="1168" cy="420.500" r="11" fill="none" stroke="#1a1aff" stroke-width="1.500"/><rect x="1165.800" y="418" width="4.600" height="4.600" fill="#3aa83a" stroke="#1a6a1a" stroke-width=".6"/><rect x="1173.800" y="410" width="4.600" height="4.600" fill="#3aa83a" stroke="#1a6a1a" stroke-width=".6"/><path d="M1160,445 q16,-1 17,17" fill="none" stroke="#1a1aff" stroke-width="2"/><rect x="1157.500" y="442.500" width="4.600" height="4.600" fill="#3aa83a" stroke="#1a6a1a" stroke-width=".6"/><rect x="1157.500" y="459.500" width="4.600" height="4.600" fill="#3aa83a" stroke="#1a6a1a" stroke-width=".6"/><rect x="1174" y="459.500" width="4.600" height="4.600" fill="#3aa83a" stroke="#1a6a1a" stroke-width=".6"/><text x="1168.500" y="496" text-anchor="middle" font-family="Liberation Serif, serif" font-weight="bold" font-size="23" fill="#111">T</text><text x="1168" y="529" text-anchor="middle" font-family="Liberation Sans, sans-serif" font-weight="bold" font-size="13" fill="#111">N</text><path d="M1157.500,528 v13 M1179,528 v13" stroke="#1a1aff" stroke-width="2"/><path d="M1160,534.500 h17" stroke="#111" stroke-width="1.200"/><path d="M1158.500,534.500 l5,-2.600 v5.200 z M1178,534.500 l-5,-2.600 v5.200 z" fill="#111"/><circle cx="1168" cy="564.5" r="7" fill="#d8d820" stroke="#111" stroke-width="1"/><path d="M1168,564.5 v-7 a7,7 0 0 1 7,7 z M1168,564.5 v7 a7,7 0 0 1 -7,-7 z" fill="#111"/><path d="M1157.5,564.5 h21.0 M1168,554.0 v21.0" stroke="#111" stroke-width="1"/><path d="M1159.300,603 h17.800 l-1.500,14.500 q-7.400,3 -14.800,0 z" fill="#d2d2d2" stroke="#a4a4a4" stroke-width=".9"/><path d="M1171,604 h5.500 l-1.300,13.500 q-2,1 -4.200,1.200 z" fill="#bcbcbc" opacity=".6"/><ellipse cx="1168.200" cy="602.500" rx="9" ry="2.800" fill="#ececec" stroke="#a4a4a4" stroke-width=".9"/><path d="M1165.300,600.300 q2.900,-4.500 5.800,0" fill="none" stroke="#a8a8a8" stroke-width="1.300"/><path d="M1163.300,606.500 v10.500 M1166.500,607 v11 M1169.700,607 v11 M1172.900,606.500 v10.500" stroke="#a8a8a8" stroke-width="1"/><path d="M1158,642.500 h22 M1176.500,639 v22" stroke="#111" stroke-width="1.200"/><path d="M1156,642.500 l5,-3 v6 z M1176.500,663.500 l-3,-5 h6 z" fill="#111"/><circle cx="1167" cy="653.5" r="5.2" fill="#d8d820" stroke="#111" stroke-width="1"/><path d="M1167,653.5 v-5.2 a5.2,5.2 0 0 1 5.2,5.2 z M1167,653.5 v5.2 a5.2,5.2 0 0 1 -5.2,-5.2 z" fill="#111"/><path d="M1159,653.5 h16 M1167,645.5 v16" stroke="#111" stroke-width="1"/><circle cx="1159.2" cy="675.6" r="1.35" fill="#111"/><circle cx="1159.2" cy="681.7" r="1.35" fill="#111"/><circle cx="1159.2" cy="687.8" r="1.35" fill="#111"/><circle cx="1159.2" cy="693.9" r="1.35" fill="#111"/><circle cx="1165.3" cy="675.6" r="1.35" fill="#111"/><circle cx="1165.3" cy="681.7" r="1.35" fill="#111"/><circle cx="1165.3" cy="687.8" r="1.35" fill="#111"/><circle cx="1165.3" cy="693.9" r="1.35" fill="#111"/><circle cx="1171.4" cy="675.6" r="1.35" fill="#111"/><circle cx="1171.4" cy="681.7" r="1.35" fill="#111"/><circle cx="1171.4" cy="687.8" r="1.35" fill="#111"/><circle cx="1171.4" cy="693.9" r="1.35" fill="#111"/><circle cx="1177.5" cy="675.6" r="1.35" fill="#111"/><circle cx="1177.5" cy="681.7" r="1.35" fill="#111"/><circle cx="1177.5" cy="687.8" r="1.35" fill="#111"/><circle cx="1177.5" cy="693.9" r="1.35" fill="#111"/><path d="M1165.300,671 v27 M1156,681.700 h24" stroke="#e02828" stroke-width="1.100"/></svg>
<div class="abs" style="left:1187px;top:99px;width:6px;height:873px;background:#ebebeb"></div>
<svg class="ico" style="left:1188px;top:530px" width="4" height="14"><circle cx="2" cy="2" r=".8" fill="#999"/><circle cx="2" cy="6" r=".8" fill="#999"/><circle cx="2" cy="10" r=".8" fill="#999"/></svg>
<div id="lay">
<div class="abs" style="left:0;top:0;width:154px;height:19px;background:linear-gradient(#c6c6c6,#dedede 45%,#ebebeb)"></div><span class="abs" style="left:2px;top:2px;font-size:11px;letter-spacing:.4px;line-height:13px;color:#222">Visibles</span>
<div class="abs" style="left:5px;top:23px;width:143px;height:844px;border:1px solid #c0c0c0;box-sizing:border-box"></div>
<div class="abs" style="left:5px;top:47px;width:143px;height:1px;background:#bdbdbd"></div>
<div class="abs" style="left:5px;top:50px;width:143px;height:817px;border:1px solid #c6c6c6;box-sizing:border-box"></div>
<div class="abs" style="left:10px;top:28px;width:54px;height:20px;box-sizing:border-box;border:1px solid #bdbdbd;border-bottom:none;border-radius:4px 4px 0 0;background:linear-gradient(#ececec,#e0e0e0);line-height:19px;text-align:center">Layer</div>
<div class="abs" style="left:63px;top:27px;width:63px;height:21px;box-sizing:border-box;border:1px solid #bdbdbd;border-bottom:none;border-radius:4px 4px 0 0;background:linear-gradient(#ffffff,#f4f4f4 50%,#ebebeb);line-height:20px;text-align:center">Render</div>
<div class="row" style="top:56px"><span class="sw" style="top:1px"><i style="background:#c2c2c2"></i></span><span class="cb on" style="top:5px"></span><span class="lbl">Through Via</span></div>
<div class="row" style="top:76px"><span class="sw" style="top:1px"><i style="background:#848400"></i></span><span class="cb" style="top:5px"></span><span class="lbl">Bl/Buried Via</span></div>
<div class="row" style="top:96px"><span class="sw" style="top:1px"><i style="background:#008484"></i></span><span class="cb" style="top:5px"></span><span class="lbl">Micro Via</span></div>
<div class="row" style="top:116px"><span class="sw" style="top:1px"><i style="background:#c2c200"></i></span><span class="cb on" style="top:5px"></span><span class="lbl">Non Plated</span></div>
<div class="row" style="top:136px"><span class="sw" style="top:1px"><i style="background:#ffffff"></i></span><span class="cb" style="top:5px"></span><span class="lbl">Ratsnest</span></div>
<div class="row" style="top:156px"><span class="sw" style="top:1px"><i style="background:#c200c2"></i></span><span class="cb on" style="top:5px"></span><span class="lbl">Pads Front</span></div>
<div class="row" style="top:176px"><span class="sw" style="top:1px"><i style="background:#480000"></i></span><span class="cb on" style="top:5px"></span><span class="lbl">Pads Back</span></div>
<div class="row" style="top:196px"><span class="sw" style="top:1px"><i style="background:#00ffff"></i></span><span class="cb on" style="top:5px"></span><span class="lbl">Text Front</span></div>
<div class="row" style="top:216px"><span class="sw" style="top:1px"><i style="background:#ff00ff"></i></span><span class="cb" style="top:5px"></span><span class="lbl">Text Back</span></div>
<div class="row" style="top:236px"><span class="sw" style="top:1px"><i style="background:#484848"></i></span><span class="cb" style="top:5px"></span><span class="lbl">Hidden Text</span></div>
<div class="row" style="top:256px"><span class="sw" style="top:1px"><i style="background:#000048"></i></span><span class="cb" style="top:5px"></span><span class="lbl">Anchors</span></div>
<div class="row" style="top:276px"><span class="sw" style="top:1px"><i style="background:#848484"></i></span><span class="cb" style="top:5px"></span><span class="lbl">Grid</span></div>
<div class="row" style="top:296px"><span class="cb on" style="top:5px"></span><span class="lbl">No-Connects</span></div>
<div class="row" style="top:316px"><span class="cb on" style="top:5px"></span><span class="lbl">Modules Front</span></div>
<div class="row" style="top:336px"><span class="cb on" style="top:5px"></span><span class="lbl">Modules Back</span></div>
<div class="row" style="top:356px"><span class="cb on" style="top:5px"></span><span class="lbl">Values</span></div>
<div class="row" style="top:376px"><span class="cb on" style="top:5px"></span><span class="lbl">References</span></div>
<div class="abs" style="left:11px;top:847px;width:132px;height:14px;background:#e6e6e6;border:1px solid #c0c0c0;box-sizing:border-box"><div class="sbb" style="left:-1px;top:-1px;width:15px;height:14px"></div><div class="tri" style="left:3px;top:2px;border-top:4px solid transparent;border-bottom:4px solid transparent;border-right:5px solid #888"></div><div class="sbb" style="left:112px;top:-1px;width:6px;height:14px;background:#dcdcdc"></div><div class="sbb" style="left:117px;top:-1px;width:14px;height:14px"></div><div class="tri" style="left:122px;top:2px;border-top:4px solid transparent;border-bottom:4px solid transparent;border-left:5px solid #000"></div></div>
</div>
<div id="msg">
<span style="left:14px;top:0px;color:#840000">Net Name</span><span style="left:14px;top:15px;color:#840000">GND</span>
<span style="left:115px;top:0px;color:#840000">Net Code</span><span style="left:115px;top:15px;color:#840000">4</span>
<span style="left:212px;top:0px;color:#0a5c0a">Pads</span><span style="left:212px;top:15px;color:#0a5c0a">15</span>
<span style="left:280px;top:0px;color:#1a1a8c">Vias</span><span style="left:280px;top:15px;color:#1a1a8c">7</span>
<span style="left:344px;top:0px;color:#840000">Net Length:</span><span style="left:344px;top:15px;color:#840000">116,330 mm</span>
<span style="left:457px;top:0px;color:#840000">On Board</span><span style="left:457px;top:15px;color:#840000">116,330 mm</span>
<span style="left:576px;top:0px;color:#840000">In Package</span><span style="left:576px;top:15px;color:#840000">0,000 mm</span>
</div>
<div id="status">
<div style="left:3px;width:568px"></div>
<div style="left:575px;width:69px">Z 11430</div>
<div style="left:647px;width:207px">X 128,950000  Y 129,600000</div>
<div style="left:858px;width:325px">dx 128,950000  dy 129,600000  d 182,823036</div>
<div style="left:1187px;width:50px">mm</div>
<div style="left:1241px;width:105px">Highlight net</div>
<svg class="ico" style="left:1330px;top:8px" width="14" height="14"><rect x="10" y="2" width="2" height="2" fill="#c4c4c4"/><rect x="6" y="6" width="2" height="2" fill="#c4c4c4"/><rect x="10" y="6" width="2" height="2" fill="#c4c4c4"/><rect x="2" y="10" width="2" height="2" fill="#c4c4c4"/><rect x="6" y="10" width="2" height="2" fill="#c4c4c4"/><rect x="10" y="10" width="2" height="2" fill="#c4c4c4"/></svg>
</div>
<svg id="cv" viewBox="39 100 1094 857" width="1094" height="857" shape-rendering="crispEdges">
<g class="b"><rect x="39" y="100" width="1094" height="857" fill="#000"/>
<rect x="39.0" y="206.0" width="1093.0" height="16.6" fill="#c2c200" style="mix-blend-mode:lighten"/>
<polyline points="-50.0,284.3 385.4,284.3 385.4,651.1 -50.0,651.1" fill="none" stroke="#008484" stroke-width="17.2" stroke-linecap="round" stroke-linejoin="round" style="mix-blend-mode:lighten"/>
<polyline points="0.0,275.5 398.5,275.5 398.5,625.5 0.0,625.5" fill="none" stroke="#484848" stroke-width="1" stroke-linecap="butt" stroke-linejoin="round" style="mix-blend-mode:lighten"/>
<polyline points="1200.0,345.0 324.3,345.0 0.0,669.3" fill="none" stroke="#c20000" stroke-width="52" stroke-linecap="round" stroke-linejoin="round" style="mix-blend-mode:lighten"/>
<polyline points="1200.0,574.7 1031.3,574.7 600.0,1006.0" fill="none" stroke="#c20000" stroke-width="51.5" stroke-linecap="round" stroke-linejoin="round" style="mix-blend-mode:lighten"/>
<polyline points="274.0,397.0 695.5,397.0" fill="none" stroke="#0000c2" stroke-width="52" stroke-linecap="round" stroke-linejoin="round" style="mix-blend-mode:lighten"/>
<polyline points="0.0,297.5 113.8,297.5 162.2,346.6 162.2,452.4 215.0,505.2" fill="none" stroke="#0000c2" stroke-width="16.8" stroke-linecap="round" stroke-linejoin="round" style="mix-blend-mode:lighten"/>
<polyline points="1200.0,472.5 424.8,472.5 398.7,498.6 274.0,498.6" fill="none" stroke="#0000c2" stroke-width="17" stroke-linecap="round" stroke-linejoin="round" style="mix-blend-mode:lighten"/>
<polyline points="1200.0,292.3 1069.3,292.3 1045.5,316.1 1045.5,376.0" fill="none" stroke="#000084" stroke-width="16.6" stroke-linecap="round" stroke-linejoin="round" style="mix-blend-mode:lighten"/>
<polyline points="521.0,546.4 761.3,546.4 792.5,577.6 958.0,577.6 1010.0,577.2 1040.6,607.8 1200.0,607.8" fill="none" stroke="#000084" stroke-width="16.6" stroke-linecap="round" stroke-linejoin="round" style="mix-blend-mode:lighten"/>
<polyline points="520.9,560.0 520.9,713.6 482.2,752.3 415.0,752.3" fill="none" stroke="#000084" stroke-width="16.4" stroke-linecap="round" stroke-linejoin="round" style="mix-blend-mode:lighten"/>
<polyline points="695.6,546.0 695.6,760.0" fill="none" stroke="#000084" stroke-width="16.4" stroke-linecap="round" stroke-linejoin="round" style="mix-blend-mode:lighten"/>
<polyline points="0.0,686.4 399.4,686.4 415.5,702.5 415.5,752.0" fill="none" stroke="#000084" stroke-width="16.6" stroke-linecap="round" stroke-linejoin="round" style="mix-blend-mode:lighten"/>
<polyline points="40.0,782.3 92.9,782.3 122.7,752.4 249.0,752.4" fill="none" stroke="#000084" stroke-width="16.6" stroke-linecap="round" stroke-linejoin="round" style="mix-blend-mode:lighten"/>
<polyline points="249.7,900.0 249.7,851.3 274.3,826.7 476.5,826.7 507.2,857.4 507.2,1000.0" fill="none" stroke="#000084" stroke-width="16.6" stroke-linecap="round" stroke-linejoin="round" style="mix-blend-mode:lighten"/>
<polyline points="415.5,900.0 415.5,947.5 395.0,968.0" fill="none" stroke="#000084" stroke-width="16.6" stroke-linecap="round" stroke-linejoin="round" style="mix-blend-mode:lighten"/>
<path d="M-18.1,397.0 A69.6,69.6 0 0 1 121.1,397.0 L121.1,537.1 A69.6,69.6 0 0 1 -18.1,537.1 Z M8.2,397.5 A43.3,43.3 0 1 0 94.8,397.5 A43.3,43.3 0 1 0 8.2,397.5 Z" fill="#ff00ff" fill-rule="evenodd" style="mix-blend-mode:lighten"/>
<path d="M-35.7,397.0 A87.2,87.2 0 0 1 138.7,397.0 L138.7,537.1 A87.2,87.2 0 0 1 -35.7,537.1 Z" fill="none" stroke="#ff00ff" stroke-width="1" style="mix-blend-mode:lighten"/>
<path d="M204.5,397.1 A69.7,69.7 0 0 1 343.9,397.1 L343.9,537.0 A69.7,69.7 0 0 1 204.5,537.0 Z M230.8,397.0 A43,43 0 1 0 316.8,397.0 A43,43 0 1 0 230.8,397.0 Z" fill="#ffffff" fill-rule="evenodd" style="mix-blend-mode:lighten"/>
<path d="M186.9,397.1 A87.3,87.3 0 0 1 361.5,397.1 L361.5,537.0 A87.3,87.3 0 0 1 186.9,537.0 Z" fill="none" stroke="#ffffff" stroke-width="1" style="mix-blend-mode:lighten"/>
<rect x="437.8" y="319.6" width="165.3" height="305.4" fill="none" stroke="#484848" stroke-width="1" style="mix-blend-mode:lighten"/>
<rect x="458.9" y="340.0" width="124.2" height="88.7" fill="#ff00ff" style="mix-blend-mode:lighten"/>
<rect x="442.7" y="323.8" width="157.1" height="121.4" fill="none" stroke="#ff00ff" stroke-width="1" style="mix-blend-mode:lighten"/>
<rect x="458.9" y="515.7" width="124.2" height="88.1" fill="#c200c2" style="mix-blend-mode:lighten"/>
<rect x="442.7" y="498.6" width="157.1" height="122.3" fill="none" stroke="#c200c2" stroke-width="1" style="mix-blend-mode:lighten"/>
<rect x="468.5" y="384.6" width="105.2" height="174.8" fill="none" stroke="#008484" stroke-width="16.8" stroke-linejoin="round" style="mix-blend-mode:lighten"/>
<rect x="617.4" y="336.3" width="157.0" height="271.2" fill="none" stroke="#484848" stroke-width="1" style="mix-blend-mode:lighten"/>
<rect x="638.1" y="358.0" width="114.8" height="80.0" fill="#ff00ff" style="mix-blend-mode:lighten"/>
<rect x="621.5" y="341.6" width="148.8" height="112.9" fill="none" stroke="#ff00ff" stroke-width="1" style="mix-blend-mode:lighten"/>
<rect x="638.1" y="506.7" width="114.8" height="79.3" fill="#c200c2" style="mix-blend-mode:lighten"/>
<rect x="621.5" y="489.2" width="148.8" height="114.6" fill="none" stroke="#c200c2" stroke-width="1" style="mix-blend-mode:lighten"/>
<rect x="660.6" y="402.7" width="70.1" height="139.7" fill="none" stroke="#008484" stroke-width="17" stroke-linejoin="round" style="mix-blend-mode:lighten"/>
<rect x="800.6" y="301.4" width="315.1" height="350.2" fill="none" stroke="#484848" stroke-width="1" style="mix-blend-mode:lighten"/>
<rect x="827.3" y="323.3" width="87.6" height="105.5" fill="#c200c2" style="mix-blend-mode:lighten"/>
<rect x="809.1" y="306.5" width="122.6" height="138.9" fill="none" stroke="#c200c2" stroke-width="1" style="mix-blend-mode:lighten"/>
<rect x="1002.2" y="323.3" width="87.6" height="105.5" fill="#c200c2" style="mix-blend-mode:lighten"/>
<rect x="984.3" y="306.5" width="122.4" height="138.9" fill="none" stroke="#c200c2" stroke-width="1" style="mix-blend-mode:lighten"/>
<rect x="914.1" y="524.3" width="88.9" height="105.4" fill="#c200c2" style="mix-blend-mode:lighten"/>
<rect x="897.5" y="507.5" width="122.1" height="139.6" fill="none" stroke="#c200c2" stroke-width="1" style="mix-blend-mode:lighten"/>
<rect x="831.5" y="406.5" width="253.9" height="139.8" fill="none" stroke="#008484" stroke-width="16.8" stroke-linejoin="round" style="mix-blend-mode:lighten"/>
<rect x="0.0" y="712.1" width="84.1" height="140.5" fill="#c200c2" style="mix-blend-mode:lighten"/>
<rect x="-10.0" y="695.6" width="111.7" height="174.4" fill="none" stroke="#c200c2" stroke-width="1" style="mix-blend-mode:lighten"/>
<polyline points="0.0,690.2 135.5,690.2 135.5,1000.0" fill="none" stroke="#484848" stroke-width="1" stroke-linecap="butt" stroke-linejoin="round" style="mix-blend-mode:lighten"/>
<polyline points="0.0,848.6 105.7,848.6 105.7,1000.0" fill="none" stroke="#008484" stroke-width="16.8" stroke-linecap="round" stroke-linejoin="round" style="mix-blend-mode:lighten"/>
<polyline points="170.3,1000.0 170.3,690.2 328.5,690.2 328.5,1000.0" fill="none" stroke="#484848" stroke-width="1" stroke-linecap="butt" stroke-linejoin="round" style="mix-blend-mode:lighten"/>
<rect x="192.2" y="712.1" width="114.6" height="80.1" fill="#c200c2" style="mix-blend-mode:lighten"/>
<rect x="175.4" y="695.6" width="148.3" height="113.2" fill="none" stroke="#c200c2" stroke-width="1" style="mix-blend-mode:lighten"/>
<rect x="192.2" y="861.1" width="114.6" height="79.5" fill="#c200c2" style="mix-blend-mode:lighten"/>
<rect x="175.4" y="844.5" width="148.3" height="114.0" fill="none" stroke="#c200c2" stroke-width="1" style="mix-blend-mode:lighten"/>
<rect x="214.5" y="760.6" width="70.2" height="132.2" fill="none" stroke="#008484" stroke-width="16.8" stroke-linejoin="round" style="mix-blend-mode:lighten"/>
<polyline points="337.4,1000.0 337.4,690.7 494.6,690.7 494.6,1000.0" fill="none" stroke="#484848" stroke-width="1" stroke-linecap="butt" stroke-linejoin="round" style="mix-blend-mode:lighten"/>
<rect x="358.1" y="712.3" width="115.0" height="79.9" fill="#c200c2" style="mix-blend-mode:lighten"/>
<rect x="341.3" y="695.5" width="149.6" height="113.5" fill="none" stroke="#c200c2" stroke-width="1" style="mix-blend-mode:lighten"/>
<rect x="358.1" y="861.1" width="115.0" height="79.8" fill="#c200c2" style="mix-blend-mode:lighten"/>
<rect x="341.3" y="844.4" width="149.6" height="114.1" fill="none" stroke="#c200c2" stroke-width="1" style="mix-blend-mode:lighten"/>
<rect x="380.5" y="760.5" width="70.1" height="131.9" fill="none" stroke="#008484" stroke-width="16.8" stroke-linejoin="round" style="mix-blend-mode:lighten"/>
<polyline points="520.3,1000.0 520.3,655.5 958.3,655.5 958.3,1000.0" fill="none" stroke="#484848" stroke-width="1" stroke-linecap="butt" stroke-linejoin="round" style="mix-blend-mode:lighten"/>
<path d="M621.1,678.1 L857.6,678.1 A78.3,78.3 0 0 1 857.6,834.7 L621.1,834.7 A78.3,78.3 0 0 1 621.1,678.1 Z" fill="#c200c2" style="mix-blend-mode:lighten"/>
<path d="M620.9,660.5 L858.3,660.5 A95.9,95.9 0 0 1 858.3,852.3 L620.9,852.3 A95.9,95.9 0 0 1 620.9,660.5 Z" fill="none" stroke="#c200c2" stroke-width="1" style="mix-blend-mode:lighten"/>
<path d="M620.9,950.1 L858.3,950.1 A95.9,95.9 0 0 1 858.3,1141.9 L620.9,1141.9 A95.9,95.9 0 0 1 620.9,950.1 Z" fill="none" stroke="#c200c2" stroke-width="1" style="mix-blend-mode:lighten"/>
<circle cx="739.3" cy="899" r="174.5" fill="none" stroke="#008484" stroke-width="17.6" style="mix-blend-mode:lighten"/>
<circle cx="1338" cy="998" r="343.5" fill="none" stroke="#008484" stroke-width="17.6" style="mix-blend-mode:lighten"/>
<circle cx="1338" cy="998" r="376" fill="none" stroke="#484848" stroke-width="1" style="mix-blend-mode:lighten"/>
<rect x="1132" y="100" width="1" height="857" fill="#000"/></g>
<g id="cursor" stroke="#fff" stroke-width="1"><line x1="583" y1="529.5" x2="608" y2="529.5"/><line x1="595.5" y1="517" x2="595.5" y2="542"/></g>
<defs><clipPath id="padclip"><path clip-rule="evenodd" d="M204.5,397.1 A69.7,69.7 0 0 1 343.9,397.1 L343.9,537 A69.7,69.7 0 0 1 204.5,537 Z M230.8,397 A43,43 0 1 0 316.8,397 A43,43 0 1 0 230.8,397 Z"/></clipPath></defs>
<g shape-rendering="auto" text-rendering="geometricPrecision">
<text transform="translate(113.0,531.4) rotate(-90)" font-size="82.0" font-family="DejaVu Sans Light, DejaVu Sans, Liberation Sans, sans-serif" font-weight="200" textLength="119.3" lengthAdjust="spacingAndGlyphs" fill="#fff" stroke="#fff" stroke-width="2.2" aria-hidden="true">PGC</text>
<text transform="translate(113.0,531.4) rotate(-90)" font-size="82.0" font-family="DejaVu Sans Light, DejaVu Sans, Liberation Sans, sans-serif" font-weight="200" textLength="119.3" lengthAdjust="spacingAndGlyphs" fill="#000">PGC</text>
<g clip-path="url(#padclip)">
<text transform="translate(265.3,488.4) rotate(-90)" font-size="78.3" font-family="DejaVu Sans Light, DejaVu Sans, Liberation Sans, sans-serif" font-weight="200" textLength="33.3" lengthAdjust="spacingAndGlyphs" fill="#000" stroke="#fff" stroke-width="1.3">5</text>
</g>
<g clip-path="url(#padclip)">
<text transform="translate(335.0,533.9) rotate(-90)" font-size="78.9" font-family="DejaVu Sans Light, DejaVu Sans, Liberation Sans, sans-serif" font-weight="200" textLength="123.9" lengthAdjust="spacingAndGlyphs" fill="#000" stroke="#fff" stroke-width="1.3">GND</text>
</g>
<text transform="translate(481.2,378.0)" font-size="47.9" font-family="DejaVu Sans Light, DejaVu Sans, Liberation Sans, sans-serif" font-weight="200" textLength="72.7" lengthAdjust="spacingAndGlyphs" fill="#fff">GND</text>
<text transform="translate(507.2,422.0)" font-size="46.9" font-family="DejaVu Sans Light, DejaVu Sans, Liberation Sans, sans-serif" font-weight="200" textLength="21.3" lengthAdjust="spacingAndGlyphs" fill="#fff">2</text>
<text transform="translate(489.7,542.8)" font-size="15.9" font-family="DejaVu Sans Light, DejaVu Sans, Liberation Sans, sans-serif" font-weight="400" textLength="60.9" lengthAdjust="spacingAndGlyphs" fill="#000" stroke="#000" stroke-width="0.35">N-0000021</text>
<text transform="translate(511.6,596.8)" font-size="47.9" font-family="DejaVu Sans Light, DejaVu Sans, Liberation Sans, sans-serif" font-weight="200" textLength="11.7" lengthAdjust="spacingAndGlyphs" fill="#fff">1</text>
<text transform="translate(658.6,392.0)" font-size="43.6" font-family="DejaVu Sans Light, DejaVu Sans, Liberation Sans, sans-serif" font-weight="200" textLength="68.1" lengthAdjust="spacingAndGlyphs" fill="#fff">GND</text>
<text transform="translate(683.5,432.3)" font-size="44.7" font-family="DejaVu Sans Light, DejaVu Sans, Liberation Sans, sans-serif" font-weight="200" textLength="20.4" lengthAdjust="spacingAndGlyphs" fill="#fff">2</text>
<text transform="translate(667.2,532.4)" font-size="15.6" font-family="DejaVu Sans Light, DejaVu Sans, Liberation Sans, sans-serif" font-weight="400" textLength="57.0" lengthAdjust="spacingAndGlyphs" fill="#000" stroke="#000" stroke-width="0.35">N-0000021</text>
<text transform="translate(687.3,580.0)" font-size="42.9" font-family="DejaVu Sans Light, DejaVu Sans, Liberation Sans, sans-serif" font-weight="200" textLength="14.0" lengthAdjust="spacingAndGlyphs" fill="#fff">1</text>
<text transform="translate(845.1,365.5)" font-size="59.7" font-family="DejaVu Sans Light, DejaVu Sans, Liberation Sans, sans-serif" font-weight="200" textLength="94.3" lengthAdjust="spacingAndGlyphs" fill="#fff" stroke="#fff" stroke-width="2.2" aria-hidden="true">GND</text>
<text transform="translate(845.1,365.5)" font-size="59.7" font-family="DejaVu Sans Light, DejaVu Sans, Liberation Sans, sans-serif" font-weight="200" textLength="94.3" lengthAdjust="spacingAndGlyphs" fill="#000">GND</text>
<text transform="translate(873.5,479.5)" font-size="20.9" font-family="DejaVu Sans Light, DejaVu Sans, Liberation Sans, sans-serif" font-weight="200" textLength="31.9" lengthAdjust="spacingAndGlyphs" fill="#fff" stroke="#fff" stroke-width="0.4">GND</text>
<text transform="translate(1081.3,391.0) rotate(-90)" font-size="41.6" font-family="DejaVu Sans Light, DejaVu Sans, Liberation Sans, sans-serif" font-weight="200" textLength="27.0" lengthAdjust="spacingAndGlyphs" fill="#fff" stroke="#fff" stroke-width="1.5" aria-hidden="true">A</text>
<text transform="translate(1081.3,391.0) rotate(-90)" font-size="41.6" font-family="DejaVu Sans Light, DejaVu Sans, Liberation Sans, sans-serif" font-weight="200" textLength="27.0" lengthAdjust="spacingAndGlyphs" fill="#000">A</text>
<text transform="translate(1029.7,404.2) rotate(-90)" font-size="16.5" font-family="DejaVu Sans Light, DejaVu Sans, Liberation Sans, sans-serif" font-weight="400" textLength="54.1" lengthAdjust="spacingAndGlyphs" fill="#000" stroke="#000" stroke-width="0.35">N-0000009</text>
<text transform="translate(993.1,589.7) rotate(-90)" font-size="40.2" font-family="DejaVu Sans Light, DejaVu Sans, Liberation Sans, sans-serif" font-weight="200" textLength="21.8" lengthAdjust="spacingAndGlyphs" fill="#fff" stroke="#fff" stroke-width="1.5" aria-hidden="true">K</text>
<text transform="translate(993.1,589.7) rotate(-90)" font-size="40.2" font-family="DejaVu Sans Light, DejaVu Sans, Liberation Sans, sans-serif" font-weight="200" textLength="21.8" lengthAdjust="spacingAndGlyphs" fill="#000">K</text>
<text transform="translate(941.6,604.2) rotate(-90)" font-size="14.7" font-family="DejaVu Sans Light, DejaVu Sans, Liberation Sans, sans-serif" font-weight="400" textLength="52.2" lengthAdjust="spacingAndGlyphs" fill="#000" stroke="#000" stroke-width="0.35">N-0000021</text>
<text transform="translate(168.4,692.9)" font-size="20.2" font-family="DejaVu Sans Light, DejaVu Sans, Liberation Sans, sans-serif" font-weight="200" textLength="77.8" lengthAdjust="spacingAndGlyphs" fill="#fff" stroke="#fff" stroke-width="0.4">N-0000021</text>
<text transform="translate(336.3,833.0)" font-size="20.0" font-family="DejaVu Sans Light, DejaVu Sans, Liberation Sans, sans-serif" font-weight="200" textLength="76.9" lengthAdjust="spacingAndGlyphs" fill="#fff" stroke="#fff" stroke-width="0.4">N-0000017</text>
<text transform="translate(220.2,737.5)" font-size="15.8" font-family="DejaVu Sans Light, DejaVu Sans, Liberation Sans, sans-serif" font-weight="400" textLength="57.9" lengthAdjust="spacingAndGlyphs" fill="#000" stroke="#000" stroke-width="0.35">N-000007</text>
<text transform="translate(237.9,786.1)" font-size="43.6" font-family="DejaVu Sans Light, DejaVu Sans, Liberation Sans, sans-serif" font-weight="200" textLength="18.5" lengthAdjust="spacingAndGlyphs" fill="#fff">2</text>
<text transform="translate(220.2,885.7)" font-size="14.7" font-family="DejaVu Sans Light, DejaVu Sans, Liberation Sans, sans-serif" font-weight="400" textLength="57.6" lengthAdjust="spacingAndGlyphs" fill="#000" stroke="#000" stroke-width="0.35">N-0000017</text>
<text transform="translate(241.8,935.5)" font-size="44.6" font-family="DejaVu Sans Light, DejaVu Sans, Liberation Sans, sans-serif" font-weight="200" textLength="11.3" lengthAdjust="spacingAndGlyphs" fill="#fff">1</text>
<text transform="translate(387.3,736.9)" font-size="14.7" font-family="DejaVu Sans Light, DejaVu Sans, Liberation Sans, sans-serif" font-weight="400" textLength="56.4" lengthAdjust="spacingAndGlyphs" fill="#000" stroke="#000" stroke-width="0.35">N-0000021</text>
<text transform="translate(403.4,786.8)" font-size="43.9" font-family="DejaVu Sans Light, DejaVu Sans, Liberation Sans, sans-serif" font-weight="200" textLength="20.2" lengthAdjust="spacingAndGlyphs" fill="#fff">2</text>
<text transform="translate(386.7,885.7)" font-size="14.7" font-family="DejaVu Sans Light, DejaVu Sans, Liberation Sans, sans-serif" font-weight="400" textLength="55.9" lengthAdjust="spacingAndGlyphs" fill="#000" stroke="#000" stroke-width="0.35">N-0000016</text>
<text transform="translate(407.0,935.0)" font-size="44.9" font-family="DejaVu Sans Light, DejaVu Sans, Liberation Sans, sans-serif" font-weight="200" textLength="11.3" lengthAdjust="spacingAndGlyphs" fill="#fff">1</text>
<text transform="translate(77.4,819.5) rotate(-90)" font-size="20.2" font-family="DejaVu Sans Light, DejaVu Sans, Liberation Sans, sans-serif" font-weight="400" textLength="71.1" lengthAdjust="spacingAndGlyphs" fill="#000" stroke="#000" stroke-width="0.35">N-000007</text>
<text transform="translate(54.0,795.2) rotate(-90)" font-size="43.9" font-family="DejaVu Sans Light, DejaVu Sans, Liberation Sans, sans-serif" font-weight="200" textLength="21.4" lengthAdjust="spacingAndGlyphs" fill="#000">5</text>
<text transform="translate(723.0,746.8)" font-size="91.1" font-family="DejaVu Sans Light, DejaVu Sans, Liberation Sans, sans-serif" font-weight="200" textLength="23.9" lengthAdjust="spacingAndGlyphs" fill="#fff" stroke="#fff" stroke-width="2.2" aria-hidden="true">1</text>
<text transform="translate(723.0,746.8)" font-size="91.1" font-family="DejaVu Sans Light, DejaVu Sans, Liberation Sans, sans-serif" font-weight="200" textLength="23.9" lengthAdjust="spacingAndGlyphs" fill="#000">1</text>
<text transform="translate(639.8,811.9)" font-size="50.2" font-family="DejaVu Sans Light, DejaVu Sans, Liberation Sans, sans-serif" font-weight="200" textLength="193.9" lengthAdjust="spacingAndGlyphs" fill="#fff" stroke="#fff" stroke-width="2.2" aria-hidden="true">N-0000021</text>
<text transform="translate(639.8,811.9)" font-size="50.2" font-family="DejaVu Sans Light, DejaVu Sans, Liberation Sans, sans-serif" font-weight="200" textLength="193.9" lengthAdjust="spacingAndGlyphs" fill="#000">N-0000021</text>
<text transform="translate(514.0,1021.1) rotate(-90)" font-size="19.9" font-family="DejaVu Sans Light, DejaVu Sans, Liberation Sans, sans-serif" font-weight="200" textLength="76.1" lengthAdjust="spacingAndGlyphs" fill="#fff" stroke="#fff" stroke-width="0.4">N-0000017</text>
</g>
</svg>
</body></html>
